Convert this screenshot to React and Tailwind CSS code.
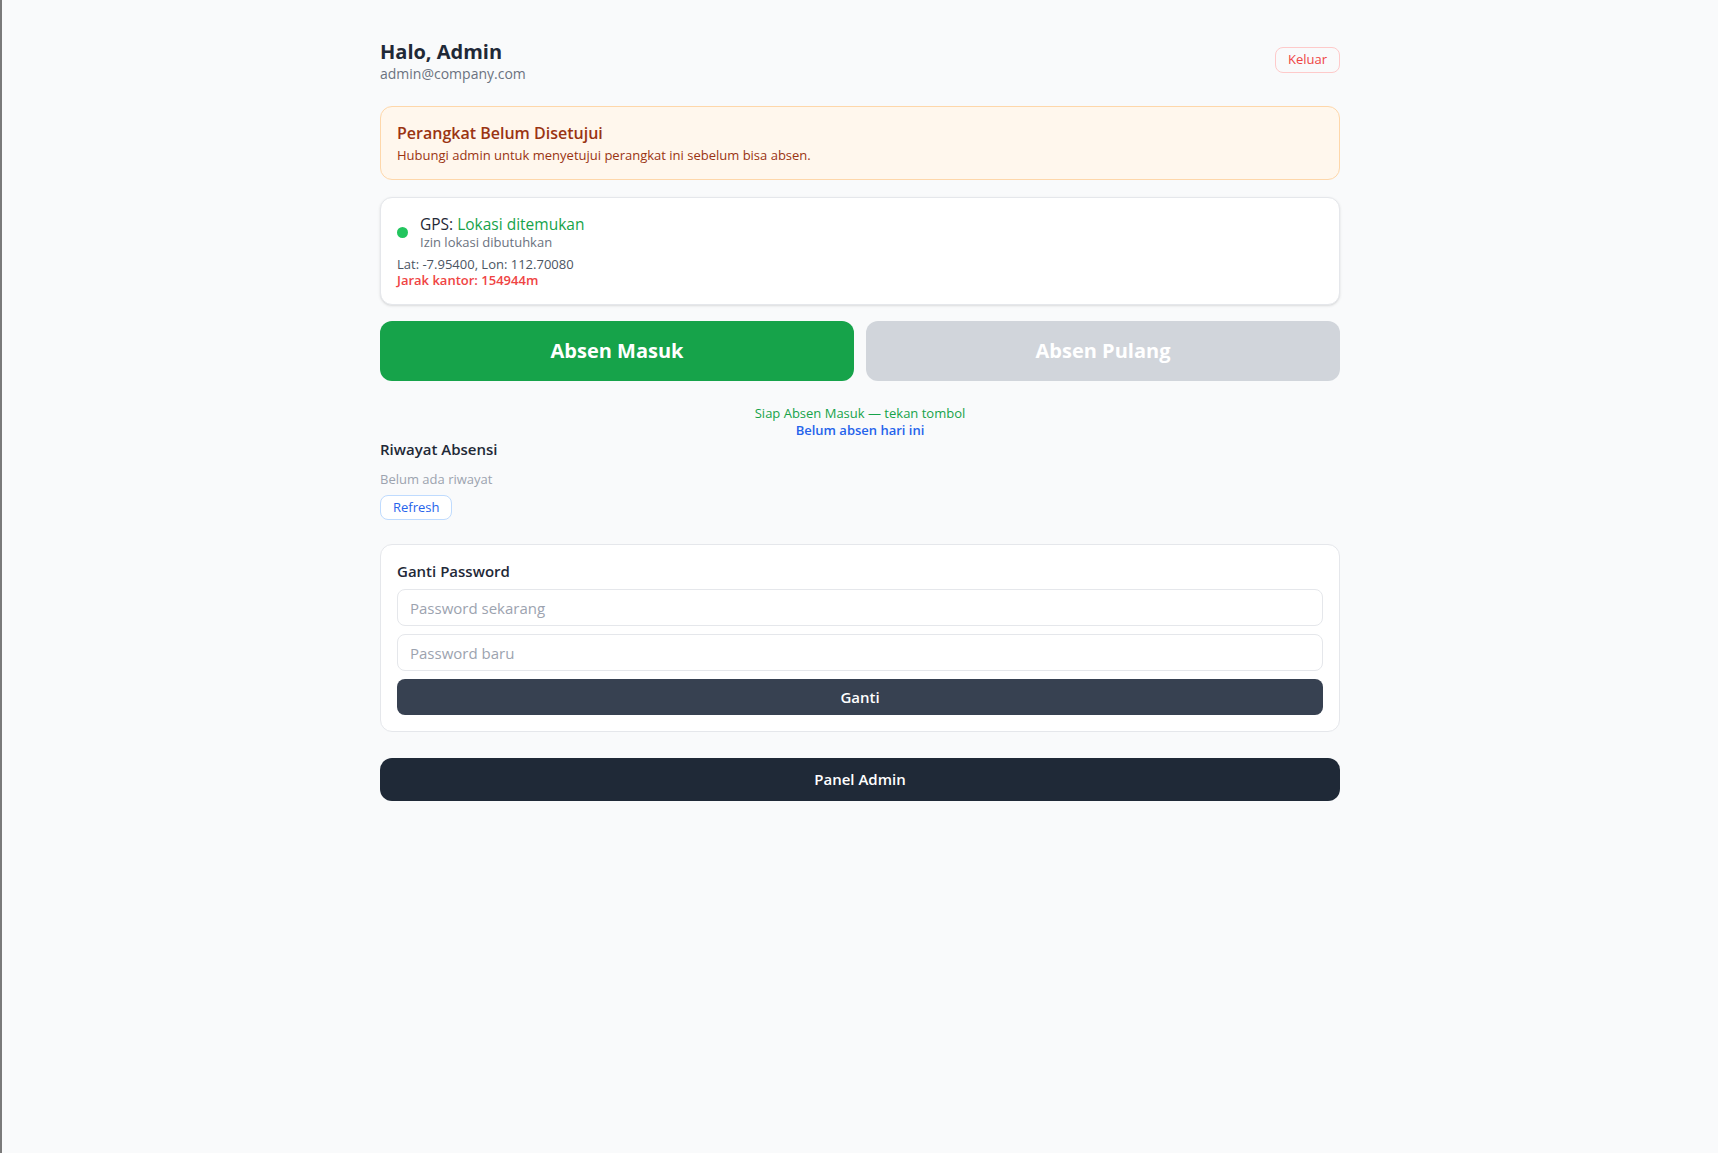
const font = { fontFamily: '"Open Sans", "Noto Sans", sans-serif' };

const GpsCard = () => (
  <div className="mt-[17px] rounded-xl border border-[#e5e7eb] bg-white px-4 pt-4 pb-4 shadow-sm">
    <div className="flex items-center gap-3">
      <span className="h-[11px] w-[11px] shrink-0 rounded-full bg-[#22c55e]"></span>
      <div>
        <p className="text-[15.5px] leading-5 font-medium text-[#1f2937]">
          GPS: <span className="text-[#16a34a]">Lokasi ditemukan</span>
        </p>
        <p className="text-[13px] leading-4 text-[#6b7280]">Izin lokasi dibutuhkan</p>
      </div>
    </div>
    <p className="mt-1.5 text-[13px] leading-4 text-[#4b5563]">Lat: -7.95400, Lon: 112.70080</p>
    <p className="text-[13px] leading-4 font-semibold text-[#ef4444]">Jarak kantor: 154944m</p>
  </div>
)

const PasswordCard = () => (
  <div className="mt-6 rounded-xl border border-[#e5e7eb] bg-white p-4">
    <h3 className="mb-2 text-[15px] leading-5 font-semibold text-[#1f2937]">Ganti Password</h3>
    <div className="flex flex-col gap-2">
      <input
        type="password"
        placeholder="Password sekarang"
        className="h-[37px] w-full rounded-lg border border-[#e5e7eb] px-3 text-[15px] placeholder:text-[#9ca3af] outline-none"
      />
      <input
        type="password"
        placeholder="Password baru"
        className="h-[37px] w-full rounded-lg border border-[#e5e7eb] px-3 text-[15px] placeholder:text-[#9ca3af] outline-none"
      />
      <button className="h-[36px] w-full rounded-lg bg-[#374151] text-[15px] font-semibold text-white">Ganti</button>
    </div>
  </div>
)

export default function App() {
  return (
    <div className="min-h-screen border-l-2 border-[#7a7a7a] bg-[#f9fafb]" style={font}>
      <div className="mx-auto max-w-[960px] pt-10 pb-10">
        {/* header */}
        <div className="flex items-start justify-between">
          <div>
            <h1 className="text-xl leading-6 font-bold text-[#1f2937]">Halo, Admin</h1>
            <p className="text-sm leading-5 text-[#6b7280]">admin@company.com</p>
          </div>
          <button className="mt-[7px] h-[26px] rounded-lg border border-[#fecaca] px-3 text-[13px] font-medium text-[#ef4444]">Keluar</button>
        </div>

        {/* device warning */}
        <div className="mt-[22px] rounded-xl border border-[#fed7aa] bg-[#fff7ed] px-4 py-3.5">
          <p className="text-base leading-6 font-semibold text-[#9a3412]">Perangkat Belum Disetujui</p>
          <p className="text-[13px] leading-5 text-[#9a3412]">Hubungi admin untuk menyetujui perangkat ini sebelum bisa absen.</p>
        </div>

        <GpsCard />

        <div className="mt-4 grid grid-cols-2 gap-3">
          <button className="rounded-xl bg-[#16a34a] py-4 text-xl leading-7 font-bold text-white">Absen Masuk</button>
          <button className="rounded-xl bg-[#d1d5db] py-4 text-xl leading-7 font-bold text-white" disabled>Absen Pulang</button>
        </div>

        <div className="mt-6 text-center text-[13px] leading-[17px]">
          <p className="text-[#16a34a]">Siap Absen Masuk — tekan tombol</p>
          <p className="font-semibold text-[#2563eb]">Belum absen hari ini</p>
        </div>

        {/* history */}
        <h2 className="text-[15px] leading-5 font-semibold text-[#1f2937]">Riwayat Absensi</h2>
        <p className="mt-2.5 text-[13px] leading-5 text-[#9ca3af]">Belum ada riwayat</p>
        <button className="mt-1.5 rounded-lg border border-[#bfdbfe] bg-white px-3 py-[3px] text-[13px] leading-[17px] text-[#2563eb]">Refresh</button>

        <PasswordCard />

        <button className="mt-[26px] h-[43px] w-full rounded-xl bg-[#1f2937] text-[15px] font-semibold text-white">Panel Admin</button>
      </div>
    </div>
  )
}
